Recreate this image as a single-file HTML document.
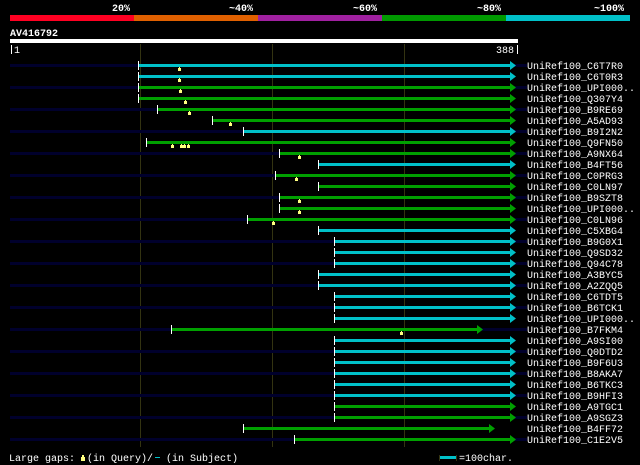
<!DOCTYPE html>
<html><head><meta charset="utf-8"><style>
html,body{margin:0;padding:0;background:#000;width:640px;height:465px;overflow:hidden}
svg{display:block}
text{font-family:"Liberation Mono","DejaVu Sans Mono",monospace;font-size:10px;fill:#fff}
</style></head><body>
<svg width="640" height="465" viewBox="0 0 640 465">
<rect width="640" height="465" fill="#000"/>
<text x="112" y="11" font-weight="bold" font-size="11">20%</text>
<text x="229" y="11" font-weight="bold" font-size="11">~40%</text>
<text x="353" y="11" font-weight="bold" font-size="11">~60%</text>
<text x="477" y="11" font-weight="bold" font-size="11">~80%</text>
<text x="594" y="11" font-weight="bold" font-size="11">~100%</text>
<rect x="10" y="15" width="124" height="6" fill="#ff0022"/>
<rect x="134" y="15" width="124" height="6" fill="#e06000"/>
<rect x="258" y="15" width="124" height="6" fill="#a020a0"/>
<rect x="382" y="15" width="124" height="6" fill="#009900"/>
<rect x="506" y="15" width="124" height="6" fill="#00c0c8"/>
<text x="10" y="36" font-weight="bold" font-size="12">AV416792</text>
<rect x="10" y="39" width="508" height="4" fill="#fff"/>
<rect x="11" y="45" width="1" height="9" fill="#fff"/>
<text x="14" y="53" font-size="11">1</text>
<text x="496" y="53" font-size="11">388</text>
<rect x="517" y="45" width="1" height="9" fill="#fff"/>
<g fill="#333311">
<rect x="140" y="44" width="1" height="403"/>
<rect x="272" y="44" width="1" height="403"/>
<rect x="404" y="44" width="1" height="403"/>
</g>
<g fill="#00002c">
<rect x="10" y="64" width="517" height="3"/>
<rect x="10" y="86" width="517" height="3"/>
<rect x="10" y="108" width="517" height="3"/>
<rect x="10" y="130" width="517" height="3"/>
<rect x="10" y="152" width="517" height="3"/>
<rect x="10" y="174" width="517" height="3"/>
<rect x="10" y="196" width="517" height="3"/>
<rect x="10" y="218" width="517" height="3"/>
<rect x="10" y="240" width="517" height="3"/>
<rect x="10" y="262" width="517" height="3"/>
<rect x="10" y="284" width="517" height="3"/>
<rect x="10" y="306" width="517" height="3"/>
<rect x="10" y="328" width="517" height="3"/>
<rect x="10" y="350" width="517" height="3"/>
<rect x="10" y="372" width="517" height="3"/>
<rect x="10" y="394" width="517" height="3"/>
<rect x="10" y="416" width="517" height="3"/>
<rect x="10" y="438" width="517" height="3"/>
</g>
<g fill="#00c0c8">
<rect x="138" y="64" width="372" height="3"/>
<rect x="138" y="75" width="372" height="3"/>
<rect x="243" y="130" width="267" height="3"/>
<rect x="318" y="163" width="192" height="3"/>
<rect x="318" y="229" width="192" height="3"/>
<rect x="334" y="240" width="176" height="3"/>
<rect x="334" y="251" width="176" height="3"/>
<rect x="334" y="262" width="176" height="3"/>
<rect x="318" y="273" width="192" height="3"/>
<rect x="318" y="284" width="192" height="3"/>
<rect x="334" y="295" width="176" height="3"/>
<rect x="334" y="306" width="176" height="3"/>
<rect x="334" y="317" width="176" height="3"/>
<rect x="334" y="339" width="176" height="3"/>
<rect x="334" y="350" width="176" height="3"/>
<rect x="334" y="361" width="176" height="3"/>
<rect x="334" y="372" width="176" height="3"/>
<rect x="334" y="383" width="176" height="3"/>
<rect x="334" y="394" width="176" height="3"/>
<path d="M510 61l6 4.5-6 4.5zM510 72l6 4.5-6 4.5zM510 127l6 4.5-6 4.5zM510 160l6 4.5-6 4.5zM510 226l6 4.5-6 4.5zM510 237l6 4.5-6 4.5zM510 248l6 4.5-6 4.5zM510 259l6 4.5-6 4.5zM510 270l6 4.5-6 4.5zM510 281l6 4.5-6 4.5zM510 292l6 4.5-6 4.5zM510 303l6 4.5-6 4.5zM510 314l6 4.5-6 4.5zM510 336l6 4.5-6 4.5zM510 347l6 4.5-6 4.5zM510 358l6 4.5-6 4.5zM510 369l6 4.5-6 4.5zM510 380l6 4.5-6 4.5zM510 391l6 4.5-6 4.5z"/>
</g>
<g fill="#00a000">
<rect x="138" y="86" width="372" height="3"/>
<rect x="138" y="97" width="372" height="3"/>
<rect x="157" y="108" width="353" height="3"/>
<rect x="212" y="119" width="298" height="3"/>
<rect x="146" y="141" width="364" height="3"/>
<rect x="279" y="152" width="231" height="3"/>
<rect x="276" y="174" width="234" height="3"/>
<rect x="318" y="185" width="192" height="3"/>
<rect x="279" y="196" width="231" height="3"/>
<rect x="279" y="207" width="231" height="3"/>
<rect x="247" y="218" width="263" height="3"/>
<rect x="171" y="328" width="306" height="3"/>
<rect x="334" y="405" width="176" height="3"/>
<rect x="334" y="416" width="176" height="3"/>
<rect x="243" y="427" width="246" height="3"/>
<rect x="294" y="438" width="216" height="3"/>
<path d="M510 83l6 4.5-6 4.5zM510 94l6 4.5-6 4.5zM510 105l6 4.5-6 4.5zM510 116l6 4.5-6 4.5zM510 138l6 4.5-6 4.5zM510 149l6 4.5-6 4.5zM510 171l6 4.5-6 4.5zM510 182l6 4.5-6 4.5zM510 193l6 4.5-6 4.5zM510 204l6 4.5-6 4.5zM510 215l6 4.5-6 4.5zM477 325l6 4.5-6 4.5zM510 402l6 4.5-6 4.5zM510 413l6 4.5-6 4.5zM489 424l6 4.5-6 4.5zM510 435l6 4.5-6 4.5z"/>
</g>
<g fill="#fff">
<rect x="138" y="61" width="1" height="9"/><rect x="138" y="72" width="1" height="9"/><rect x="138" y="83" width="1" height="9"/><rect x="138" y="94" width="1" height="9"/>
<rect x="157" y="105" width="1" height="9"/><rect x="212" y="116" width="1" height="9"/><rect x="243" y="127" width="1" height="9"/><rect x="146" y="138" width="1" height="9"/>
<rect x="279" y="149" width="1" height="9"/><rect x="318" y="160" width="1" height="9"/><rect x="275" y="171" width="1" height="9"/><rect x="318" y="182" width="1" height="9"/>
<rect x="279" y="193" width="1" height="9"/><rect x="279" y="204" width="1" height="9"/><rect x="247" y="215" width="1" height="9"/><rect x="318" y="226" width="1" height="9"/>
<rect x="334" y="237" width="1" height="9"/><rect x="334" y="248" width="1" height="9"/><rect x="334" y="259" width="1" height="9"/><rect x="318" y="270" width="1" height="9"/>
<rect x="318" y="281" width="1" height="9"/><rect x="334" y="292" width="1" height="9"/><rect x="334" y="303" width="1" height="9"/><rect x="334" y="314" width="1" height="9"/>
<rect x="171" y="325" width="1" height="9"/><rect x="334" y="336" width="1" height="9"/><rect x="334" y="347" width="1" height="9"/><rect x="334" y="358" width="1" height="9"/>
<rect x="334" y="369" width="1" height="9"/><rect x="334" y="380" width="1" height="9"/><rect x="334" y="391" width="1" height="9"/><rect x="334" y="402" width="1" height="9"/>
<rect x="334" y="413" width="1" height="9"/><rect x="243" y="424" width="1" height="9"/><rect x="294" y="435" width="1" height="9"/>
</g>
<g fill="#ffff80">
<path d="M178 71h3v-3h-1v-1h-1v1h-1zM178 82h3v-3h-1v-1h-1v1h-1zM179 93h3v-3h-1v-1h-1v1h-1zM184 104h3v-3h-1v-1h-1v1h-1zM188 115h3v-3h-1v-1h-1v1h-1zM229 126h3v-3h-1v-1h-1v1h-1zM171 148h3v-3h-1v-1h-1v1h-1zM180 148h3v-3h-1v-1h-1v1h-1zM183 148h3v-3h-1v-1h-1v1h-1zM187 148h3v-3h-1v-1h-1v1h-1zM298 159h3v-3h-1v-1h-1v1h-1zM295 181h3v-3h-1v-1h-1v1h-1zM298 203h3v-3h-1v-1h-1v1h-1zM298 214h3v-3h-1v-1h-1v1h-1zM272 225h3v-3h-1v-1h-1v1h-1zM400 335h3v-3h-1v-1h-1v1h-1z"/>
</g>
<g>
<text x="527" y="69">UniRef100_C6T7R0</text>
<text x="527" y="80">UniRef100_C6T0R3</text>
<text x="527" y="91">UniRef100_UPI000..</text>
<text x="527" y="102">UniRef100_Q307Y4</text>
<text x="527" y="113">UniRef100_B9RE69</text>
<text x="527" y="124">UniRef100_A5AD93</text>
<text x="527" y="135">UniRef100_B9I2N2</text>
<text x="527" y="146">UniRef100_Q9FN50</text>
<text x="527" y="157">UniRef100_A9NX64</text>
<text x="527" y="168">UniRef100_B4FT56</text>
<text x="527" y="179">UniRef100_C0PRG3</text>
<text x="527" y="190">UniRef100_C0LN97</text>
<text x="527" y="201">UniRef100_B9SZT8</text>
<text x="527" y="212">UniRef100_UPI000..</text>
<text x="527" y="223">UniRef100_C0LN96</text>
<text x="527" y="234">UniRef100_C5XBG4</text>
<text x="527" y="245">UniRef100_B9G0X1</text>
<text x="527" y="256">UniRef100_Q9SD32</text>
<text x="527" y="267">UniRef100_Q94C78</text>
<text x="527" y="278">UniRef100_A3BYC5</text>
<text x="527" y="289">UniRef100_A2ZQQ5</text>
<text x="527" y="300">UniRef100_C6TDT5</text>
<text x="527" y="311">UniRef100_B6TCK1</text>
<text x="527" y="322">UniRef100_UPI000..</text>
<text x="527" y="333">UniRef100_B7FKM4</text>
<text x="527" y="344">UniRef100_A9SI00</text>
<text x="527" y="355">UniRef100_Q0DTD2</text>
<text x="527" y="366">UniRef100_B9F6U3</text>
<text x="527" y="377">UniRef100_B8AKA7</text>
<text x="527" y="388">UniRef100_B6TKC3</text>
<text x="527" y="399">UniRef100_B9HFI3</text>
<text x="527" y="410">UniRef100_A9TGC1</text>
<text x="527" y="421">UniRef100_A9SGZ3</text>
<text x="527" y="432">UniRef100_B4FF72</text>
<text x="527" y="443">UniRef100_C1E2V5</text>
</g>
<text x="9" y="461">Large gaps:</text>
<path d="M81 461h4v-4h-1v-2h-2v2h-1z" fill="#ffff80"/>
<text x="87" y="461">(in Query)/</text>
<rect x="155" y="457" width="5" height="1" fill="#00c0c8"/>
<text x="166" y="461">(in Subject)</text>
<rect x="439" y="455" width="1" height="6" fill="#333311"/>
<rect x="440" y="456" width="16" height="3" fill="#00c0c8"/>
<rect x="456" y="455" width="1" height="6" fill="#333311"/>
<text x="459" y="461">=100char.</text>
</svg>
</body></html>
